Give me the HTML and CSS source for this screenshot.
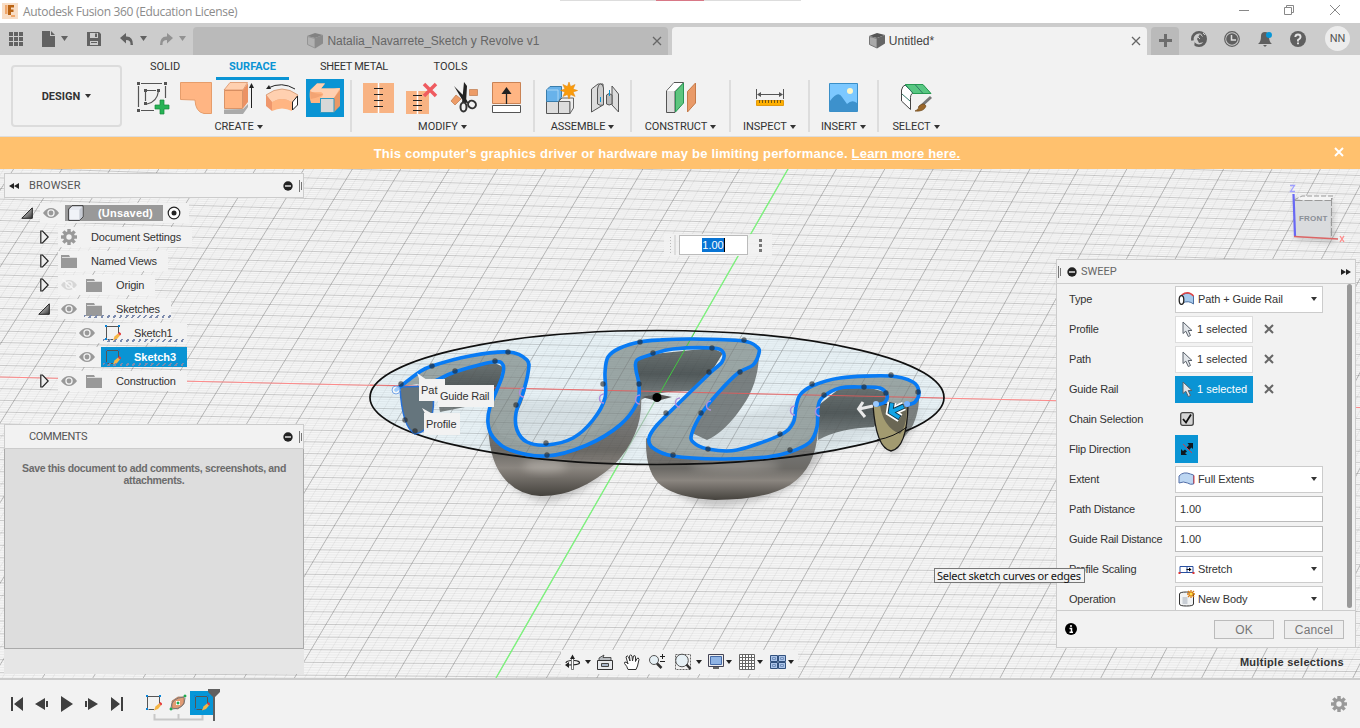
FILE: index.html
```html
<!DOCTYPE html>
<html lang="en">
<head>
<meta charset="utf-8">
<title>Autodesk Fusion 360 (Education License)</title>
<link rel="stylesheet" href="styles.css">
</head>
<body>
<svg width="0" height="0" class="defs">
  <defs>
    <linearGradient id="metal" x1="0" y1="0" x2="0" y2="1"><stop offset="0" stop-color="#7f8283"/><stop offset=".55" stop-color="#6c6a66"/><stop offset=".72" stop-color="#8b8680"/><stop offset="1" stop-color="#45423d"/></linearGradient>
    <linearGradient id="arm" x1="0" y1="0" x2="0" y2="1"><stop offset="0" stop-color="#6b7373"/><stop offset=".5" stop-color="#525a5b"/><stop offset="1" stop-color="#7d8586"/></linearGradient>
    <linearGradient id="tri" x1="0" y1="0" x2="1" y2="1"><stop offset="0" stop-color="#fff"/><stop offset="1" stop-color="#333"/></linearGradient>
    <symbol id="eye" viewBox="0 0 16 12"><path d="M0 6Q3.500 1 8 1T16 6Q12.500 11 8 11T0 6Z" fill="#999"/><circle cx="8" cy="6" r="3.700" fill="#f2f2f2"/><circle cx="8" cy="6" r="2.400" fill="#999"/></symbol>
    <symbol id="folder" viewBox="0 0 16 14"><path d="M0 1H8L9 3H16V14H0Z" fill="#999"/><path d="M1 3.500H16" stroke="#ddd"/></symbol>
    <symbol id="closed" viewBox="0 0 9 14"><path d="M.8 1H2.500L8.200 7 2.500 13H.8Z" fill="#eee" stroke="#222" stroke-width="1.200"/></symbol>
    <symbol id="open" viewBox="0 0 12 12"><path d="M11.300 .8V11.300H.8Z" fill="url(#tri)" stroke="#222"/></symbol>
    <symbol id="gear" viewBox="-8 -8 16 16"><g fill="#999"><g id="teeth"><rect x="-1.700" y="-8" width="3.400" height="16"/><rect x="-8" y="-1.700" width="16" height="3.400"/></g><use href="#teeth" transform="rotate(45)"/><circle r="5.800"/></g><circle r="2.700" fill="#f2f2f2"/></symbol>
    <symbol id="sketch" viewBox="0 0 16 16"><path d="M2 1.500H13M1.500 2V13M2.500 14.500H8M13.500 2V8" stroke="#555" fill="none"/><path d="M0 0H2V2H0ZM13 0H15V2H13ZM0 13H2V15H0Z" fill="#0a84d8"/><path d="M8 15.500L9.500 11.500 13 8.500 15 10.500 12 14Z" fill="#f6b545"/><path d="M13 8.500L14.500 7 16.500 9 15 10.500Z" fill="#e43a3a"/></symbol>
    <symbol id="minus" viewBox="0 0 10 10"><circle cx="5" cy="5" r="4.700" fill="#222"/><path d="M2 5H8" stroke="#fff" stroke-width="1.300"/></symbol>
    <symbol id="grip" viewBox="0 0 4 12"><path d="M.5 0V12M2.500 2V10" stroke="#777"/></symbol>
    <symbol id="cube" viewBox="0 0 16 16"><path d="M0 3L8 0 16 2 8 5Z" fill="#555"/><path d="M.5 3.500L8 5.500V15L.5 11.500Z" fill="#aaa" stroke="#777"/><path d="M8 5L16 2V10.500L8 15.500Z" fill="#666"/></symbol>
    <symbol id="x" viewBox="0 0 10 10"><path d="M1 1L9 9M9 1L1 9" stroke="currentColor" stroke-width="2"/></symbol>
    <symbol id="pointer" viewBox="0 0 12 17"><path d="M1 1V12.500L3.800 10.200 6.300 15.500 8.500 14.500 6.200 9.500H10Z" fill="#e2e6ea" stroke="#59616b"/></symbol>
    <symbol id="down" viewBox="0 0 6 4"><path d="M0 0H6L3 4Z" fill="currentColor"/></symbol>
  </defs>
</svg>

<header class="titlebar">
  <svg class="logo" viewBox="2 3 16 16"><rect x="2" y="3" width="16" height="16" fill="#f8ddc5"/><path d="M8 5H14V7.500H11V9.500H13.500V12H11V15H8Z" fill="#b96314"/><path d="M11 15H15V17H11ZM5 5H7.500V14H5Z" fill="#f0a76a"/></svg>
  <span class="app-name">Autodesk Fusion 360 (Education License)</span>
  <svg class="top-strip" viewBox="0 0 241 1"><path d="M0 0H241V1H0Z" fill="#ddd"/><path d="M96 0H144V1H96Z" fill="#d87886"/></svg>
  <svg class="window-buttons" viewBox="1232 0 120 23"><path d="M1239 10.500H1249M1284.500 7.500H1291.500V14.500H1284.500ZM1286.500 7V5.500H1293.500V12.500H1292M1330 5L1340 15M1340 5L1330 15" fill="none" stroke="#888"/></svg>
</header>

<nav class="tabbar">
  <svg class="quick" viewBox="0 23 193 32" fill="#626262">
    <path d="M9 32h4v4h-4zM14 32h4v4h-4zM19 32h4v4h-4zM9 37h4v4h-4zM14 37h4v4h-4zM19 37h4v4h-4zM9 42h4v4h-4zM14 42h4v4h-4zM19 42h4v4h-4z"/>
    <path d="M42 31H50V36H55V47H42ZM51 31L55 35H51ZM61 36H68L64.500 41Z"/>
    <path fill-rule="evenodd" d="M87 32H99L101 34V46H87ZM90 33V38H98V33ZM90 41V45H98V41ZM95 33.500H97V37H95ZM91 42H97V43H91Z"/>
    <path d="M120 38L126 33V36.500Q133 36 133 45H130.500Q131 40 126 40V43.500ZM140 36H147L143.500 41Z"/>
    <path fill="#929292" d="M173 38L167 33V36.500Q160 36 160 45H162.500Q162 40 167 40V43.500ZM179 36H186L182.500 41Z"/>
  </svg>
  <div class="doc-tab"><span class="doc-name"><svg class="faded" width="16" height="16"><use href="#cube"/></svg>Natalia_Navarrete_Sketch y Revolve v1</span><svg class="tab-close" viewBox="0 0 10 10"><path d="M1 1L9 9M9 1L1 9" stroke="#666" stroke-width="1.300"/></svg></div>
  <div class="doc-tab active"><span class="doc-name"><svg width="16" height="16"><use href="#cube"/></svg>Untitled*</span><svg class="tab-close" viewBox="0 0 10 10"><path d="M1 1L9 9M9 1L1 9" stroke="#666" stroke-width="1.300"/></svg></div>
  <div class="add-tab"><svg viewBox="0 0 13 13" width="13" height="13"><path d="M6.500 0V13M0 6.500H13" stroke="#6d6d6d" stroke-width="3"/></svg></div>
  <svg class="status" viewBox="1180 23 144 32">
    <circle cx="1199" cy="39" r="6.700" fill="none" stroke="#5f5f5f" stroke-width="2.600"/><path d="M1197 39L1200 34 1206 36 1205 42 1199 43Z" fill="#5f5f5f"/><path d="M1190.500 41L1195 40 1194 47Z" fill="#ccc"/><path d="M1197 36l3 3M1200 33.500l2.500 3M1203 33l2 2" stroke="#ccc"/>
    <circle cx="1232" cy="39" r="7.300" fill="none" stroke="#5f5f5f" stroke-width="1.200"/><circle cx="1232" cy="39" r="5.800" fill="#5f5f5f"/><path d="M1231.500 35V40H1236" fill="none" stroke="#ddd" stroke-width="1.500"/>
    <path d="M1258 44Q1261 42 1261 36Q1261 32 1265 32T1269 36Q1269 42 1272 44ZM1263 45H1267L1265 47Z" fill="#5f5f5f"/><circle cx="1269" cy="35" r="3" fill="#0696d7"/>
    <circle cx="1298" cy="39" r="8" fill="#5f5f5f"/><path d="M1295.300 37Q1295.500 34.500 1298 34.500T1300.600 37Q1300.500 38.500 1298 40V41.500M1298 42.500V44.300" fill="none" stroke="#e5e5e5" stroke-width="1.900"/>
  </svg>
  <div class="avatar">NN</div>
</nav>

<section class="ribbon">
  <div class="workspace">DESIGN<svg class="caret" width="6" height="4"><use href="#down"/></svg></div>
  <div class="ribbon-main">
    <div class="ribbon-tabs"><span class="solid">SOLID</span><span class="selected">SURFACE</span><span class="sheet">SHEET METAL</span><span class="tools">TOOLS</span></div>
    <div class="groups">
      <div class="group create"><div class="icons">
        <svg viewBox="134 79 38 38"><path d="M141 83.500H162M138.500 86V107M141 110.500H154M165.500 86V98M147 90.500H156M145.500 92V101M158.500 91Q157 102 147 104" fill="none" stroke="#555" stroke-width="1.200"/><path d="M137 82h3v3h-3zM164 82h3v3h-3zM137 109h3v3h-3zM144 89h3v3h-3zM157 89h3v3h-3zM144 102h3v3h-3z" fill="#555"/><path d="M160 100H164V105H169V109H164V114H160V109H155V105H160Z" fill="#27b355" stroke="#148a3a" stroke-width=".7"/></svg>
        <svg viewBox="177 79 38 38"><path d="M180.500 82.500H211.500V113.500H204Q195.500 112 195 100L180.500 99.500Z" fill="#ffb583" stroke="#e69d6b"/></svg>
        <svg viewBox="220 79 38 38"><path d="M224 109.500L243 109 248 104V107L243 114H224Z" fill="#aaa"/><path d="M224 90L230 82.500H247.500L243 90Z" fill="#ffd0b0" stroke="#d78859" stroke-width=".7"/><path d="M224.500 90.500H242.500V108.500H224.500Z" fill="#ffb583" stroke="#cc7946" stroke-width=".7"/><path d="M243 90L248 83V102L243 108.500Z" fill="#eb9264"/><path d="M251.500 108V87" stroke="#222"/><path d="M249 88L251.500 83 254 88Z" fill="#222"/></svg>
        <svg viewBox="263 79 38 38"><path d="M266 95Q282 83 298 95L292 103Q282 96 272 103Z" fill="#ffd0b0" stroke="#c98961" stroke-width=".7"/><path d="M266 95L272 102V111L266 106Z" fill="#ef976c"/><path d="M272 102Q282 96 292 102V111Q282 106 272 111Z" fill="#ffb583"/><path d="M292.500 102L297.500 96V105L292.500 110Z" fill="#fff" stroke="#222"/><path d="M268 88Q282 81 295 89" fill="none" stroke="#222"/><path d="M266 89L269 85 271 89Z" fill="#222"/></svg>
        <svg class="on" viewBox="306 79 38 38"><path d="M310 90L317 83.500H325L321 88.500H333L340 88V104L334 112V98H320V103H311Q309 98 310 90Z" fill="#ffb583"/><path d="M311 90L317 83.500H325L321 88.500H335L340 88 334 98H320Q326 94 321 92H310Z" fill="#ffd0b0"/><path d="M310 91Q315 94 323 94Q321 97 310.500 99Z" fill="#f3a473"/><path d="M334 98L340 90V106L334 112Z" fill="#e99866"/><path d="M320.500 98.500H334V112.500H320.500Z" fill="#d8d8d8" stroke="#319ac0"/></svg>
      </div><label>CREATE<svg class="caret" width="6" height="4"><use href="#down"/></svg></label></div>
      <div class="group modify"><div class="icons">
        <svg viewBox="359 79 38 38"><path d="M363 83H394V113H363Z" fill="#f8b383"/><path d="M378.500 83V113" stroke="#fff" stroke-width="1.500"/><path d="M374 88.500H383M374 94.500H383M374 100.500H383M374 106.500H383" stroke="#222"/></svg>
        <svg viewBox="402 79 38 38"><path d="M406 91H429V114H406Z" fill="#f8b383"/><path d="M417.500 91V114" stroke="#fff" stroke-width="1.500"/><path d="M413 95.500H422M413 100.500H422M413 105.500H422M413 110.500H422" stroke="#222"/><path d="M424 84L436 96M436 84L424 96" stroke="#ef5b60" stroke-width="3.500"/></svg>
        <svg viewBox="445 79 38 38"><path d="M469.500 89.500H477.500V95.500H469.500ZM451 101L456 95 461 99 455 105Z" fill="#ed9c67" stroke="#b66e3f" stroke-width=".6"/><path d="M454 86L465 97 469 104 463 101ZM464 82L467 86 466 103 462 103Z" fill="#222"/><ellipse cx="463.500" cy="107" rx="3" ry="4.500" fill="none" stroke="#333" stroke-width="2"/><ellipse cx="472" cy="104.500" rx="4" ry="3.700" transform="rotate(35 472 104.500)" fill="none" stroke="#333" stroke-width="2"/></svg>
        <svg viewBox="488 79 38 38"><path d="M492.500 82.500H520.500V103.500H492.500Z" fill="#ffb583" stroke="#ca8355"/><path d="M492.500 105.500H520.500V112.500H492.500Z" fill="#fff" stroke="#555"/><path d="M506.500 104V92" stroke="#222" stroke-width="1.300"/><path d="M501.500 94L506.500 87 511.500 94Z" fill="#222"/></svg>
      </div><label>MODIFY<svg class="caret" width="6" height="4"><use href="#down"/></svg></label></div>
      <div class="group assemble"><div class="icons">
        <svg viewBox="542 79 38 38"><path d="M546.500 101.500H558.500V113.500H546.500ZM558.500 101.500H570V113.500H558.500Z" fill="#ddd" stroke="#555"/><path d="M558.500 101.500L562 98H573.500V108L570 113.500V101.500Z" fill="#eee" stroke="#666"/><path d="M546.500 90L550 86.500H561.500V97L558 101.500H546.500Z" fill="#68b2ea" stroke="#397dac"/><path d="M547 90H558V101" fill="none" stroke="#a9d5f3"/><path d="M569 82l1.600 4.500 4.500-2-2 4.500 4.500 1.500-4.500 1.500 2 4.500-4.500-2-1.600 4.500-1.600-4.500-4.500 2 2-4.500-4.500-1.500 4.500-1.500-2-4.500 4.500 2z" fill="#f99b0c" stroke="#e38405" stroke-width=".5"/></svg>
        <svg viewBox="586 79 38 38"><path d="M591.500 89L598 84H603V105L591.500 112Z" fill="#ddd" stroke="#555"/><path d="M597.500 89Q598 84 600.500 84T603.500 88V105Q600 106 597.500 104Z" fill="#ccc" stroke="#555"/><path d="M612 92V86L618.500 94V112L612 105Z" fill="#ddd" stroke="#555"/><path d="M606.500 95Q609 92 612 95V104Q609 106 606.500 104Z" fill="#bbb" stroke="#555"/><path d="M600.500 97V102M609.500 90V96" stroke="#0696d7"/></svg>
      </div><label>ASSEMBLE<svg class="caret" width="6" height="4"><use href="#down"/></svg></label></div>
      <div class="group construct"><div class="icons"><svg viewBox="662 79 38 38"><path d="M666.500 91L674 82.500H683.500L675 91V112.500H666.500Z" fill="#ddd" stroke="#555"/><path d="M667 91L674 83H683L675 91Z" fill="#fff"/><path d="M675.500 91.500L683.500 83V103L675.500 112Z" fill="#5ec57e" stroke="#289653"/><path d="M687.500 91.500L695.500 83V103L687.500 112Z" fill="#e99a68" stroke="#c57a49"/></svg></div><label>CONSTRUCT<svg class="caret" width="6" height="4"><use href="#down"/></svg></label></div>
      <div class="group inspect"><div class="icons"><svg viewBox="751 79 38 38"><path d="M756.500 89V99M783.500 89V99M758 94.500H782" stroke="#555"/><path d="M757 94.500L761 92V97ZM783 94.500L779 92V97Z" fill="#555"/><path d="M756.500 100.500H783.500V105.500H756.500Z" fill="#ffb000" stroke="#e29a10"/><path d="M759.500 100V103M762.500 100V103M765.500 100V103M768.500 100V103M771.500 100V103M774.500 100V103M777.500 100V103M780.500 100V103" stroke="#765710"/></svg></div><label>INSPECT<svg class="caret" width="6" height="4"><use href="#down"/></svg></label></div>
      <div class="group insert"><div class="icons"><svg viewBox="825 79 38 38"><path d="M829.500 83.500H857.500V111.500H829.500Z" fill="#7cc8ff" stroke="#3a8fc8"/><path d="M830 101Q838 90 842 97L847 104Q852 99 857 103V111H830Z" fill="#3d91cc"/><circle cx="850" cy="91" r="3" fill="#fff7c8"/></svg></div><label>INSERT<svg class="caret" width="6" height="4"><use href="#down"/></svg></label></div>
      <div class="group select"><div class="icons"><svg viewBox="896 79 38 38"><path d="M900.500 90Q901 86 905 84.500L922 85 929 93H912Q909 94 909.500 100V109.500L900.500 101Z" fill="#fff" stroke="#444"/><path d="M904.500 84.500H922L930 93.500H912Z" fill="#58c782" stroke="#269b52"/><path d="M914 84.500L922 93.500M901 94L909 101M904 85L912 93" fill="none" stroke="#376"/><path d="M918 108L930 97" stroke="#777" stroke-width="3"/><path d="M914 111Q918 110 918 106Q923 102 925 106Q923 112 914 111Z" fill="#9b682b" stroke="#70491a" stroke-width=".7"/></svg></div><label>SELECT<svg class="caret" width="6" height="4"><use href="#down"/></svg></label></div>
    </div>
  </div>
</section>

<div class="banner"><span>This computer's graphics driver or hardware may be limiting performance. <u>Learn more here.</u></span><svg class="banner-close" width="10" height="10"><use href="#x"/></svg></div>

<main class="viewport">
  <svg class="scene" viewBox="0 169 1360 509">
    <clipPath id="disc"><ellipse cx="657" cy="397.500" rx="287" ry="67"/></clipPath>
    <filter id="soft" x="-10%" y="-10%" width="120%" height="130%"><feGaussianBlur stdDeviation="3"/></filter>
    <filter id="gloss" x="-20%" y="-50%" width="140%" height="200%"><feGaussianBlur stdDeviation="4"/></filter>
    <g id="grid"></g>
    <path d="M0 377L1360 407.500" stroke="#ff8a8a" stroke-width="1"/>
    <path d="M788 169L496 678" stroke="#7cf57c" stroke-width="1.300"/>
    <g class="shadow" filter="url(#soft)">
      <path d="M485 435Q505 500 548 502Q600 495 648 425L640 400L490 400ZM645 440Q655 500 715 507Q800 502 825 450L870 435 895 455 925 410 800 400Z"/>
    </g>
    <ellipse cx="657" cy="397.500" rx="287" ry="67" fill="#e1f0f6" fill-opacity=".65"/>
    <path d="M435 383L456 372 493 362 503 367 500 380 490 402 440 412Z" fill="url(#arm)"/>
    <path d="M636 372L637 360 653 354 712 348 723 353 710 374 689 391Q655 391 641 400Z" fill="url(#arm)"/>
    <path d="M818 440L819 405 840 388 863 386 885 392 887 405 874 427Q840 428 818 440Z" fill="url(#arm)"/>
    <path d="M759 355Q758 385 742 407Q725 432 707 440L692 433 705 405 740 372Z" fill="#7a8182"/>
    <path d="M528 370Q528 393 517 413L518 390Z" fill="#777f7f"/>
    <path d="M488 405Q486 457 503 477Q517 495 540 496Q578 497 615 464Q644 433 641 395L620 420 547 450 500 435Z" fill="url(#metal)"/>
    <path d="M646 438Q645 474 662 486Q678 498 715 500Q765 500 790 485Q816 468 818 430L790 447 720 454 670 450Z" fill="url(#metal)"/>
    <path d="M906 405L919 392Q920 410 913 425Q908 434 900 441Z" fill="#7c8180"/>
    <g class="highlight" filter="url(#gloss)"><ellipse cx="545" cy="466" rx="22" ry="6"/><ellipse cx="735" cy="466" rx="45" ry="4"/></g>
    <path class="smooth band" data-points="396,390 418,373 432,366 470,356 508,352 527,360 528,373 523,393 516,413 517,430 527,442 547,445 573,438 593,420 605,398 605,373 608,357 620,348 640,342 660,340 693,339 743,341 757,347 759,353 753,365 738,373 718,393 702,413 692,433 693,442 708,449 737,450 780,435 793,423 796,407 800,395 812,386 840,378 890,376 913,382 919,392 915,402 907,405 877,405 885,402 887,395 880,388 863,387 840,388 823,397 818,407 817,427 810,442 790,452 767,457 720,459 673,456 653,448 649,438 657,425 677,405 710,373 722,362 723,352 712,348 673,349 653,354 637,360 636,370 639,385 637,403 620,425 587,445 547,456 510,450 493,437 488,423 490,407 502,377 503,365 493,362 455,372 437,380 400,387"/>
    <g clip-path="url(#disc)"><use href="#grid" opacity=".65"/></g>
    <path d="M370 385L944 398" stroke="#ee5a5a" stroke-width=".8"/>
    <path d="M696 330L657 398" stroke="#40d440" stroke-width=".9"/>
    <ellipse cx="657" cy="397.500" rx="287" ry="67" fill="none" stroke="#101010" stroke-width="1.700"/>
    <path d="M400 387L433 386Q437 431 415 434Q402 427 400 387Z" fill="#65757d" stroke="#2871d6" stroke-width="1.500"/>
    <path d="M873 405H908Q907 448 891 451Q876 448 873 405Z" fill="#a29a70" stroke="#171717" stroke-width="1.300"/>
    <path d="M880 405L907 405Q907 426 900 434Q883 427 880 405Z" fill="#6a6755"/>
    <path d="M877 440Q894 437 907 427" fill="none" stroke="#111"/>
    <g class="rail">
      <path class="smooth" data-points="396,390 418,373 432,366 470,356 508,352 527,360 528,373 523,393 516,413 517,430 527,442 547,445 573,438 593,420 605,398 605,373 608,357 620,348 640,342 660,340 693,339 743,341 757,347 759,353 753,365 738,373 718,393 702,413 692,433 693,442 708,449 737,450 780,435 793,423 796,407 800,395 812,386 840,378 890,376 913,382 919,392 915,402 907,405"/>
      <path class="smooth" data-points="437,380 455,372 493,362 503,365 502,377 490,407 488,423 493,437 510,450 547,456 587,445 620,425 637,403 639,385 636,370 637,360 653,354 673,349 712,348 723,352 722,362 710,373 677,405 657,425 649,438 653,448 673,456 720,459 767,457 790,452 810,442 817,427 818,407 823,397 840,388 863,387 880,388 887,395 885,402 877,405"/>
    </g>
    <g class="knots"><circle cx="432" cy="366" r="2.700"/><circle cx="455" cy="371" r="2.700"/><circle cx="508" cy="352" r="2.700"/><circle cx="495" cy="361" r="2.700"/><circle cx="516" cy="405" r="2.700"/><circle cx="546" cy="443" r="2.700"/><circle cx="547" cy="455" r="2.700"/><circle cx="603" cy="384" r="2.700"/><circle cx="639" cy="384" r="2.700"/><circle cx="640" cy="342" r="2.700"/><circle cx="653" cy="353" r="2.700"/><circle cx="744" cy="340" r="2.700"/><circle cx="712" cy="348" r="2.700"/><circle cx="709" cy="372" r="2.700"/><circle cx="740" cy="372" r="2.700"/><circle cx="666" cy="413" r="2.700"/><circle cx="701" cy="413" r="2.700"/><circle cx="708" cy="449" r="2.700"/><circle cx="673" cy="455" r="2.700"/><circle cx="780" cy="434" r="2.700"/><circle cx="790" cy="450" r="2.700"/><circle cx="812" cy="384" r="2.700"/><circle cx="824" cy="395" r="2.700"/><circle cx="864" cy="387" r="2.700"/><circle cx="891" cy="375" r="2.700"/><circle cx="918" cy="392" r="2.700"/><circle cx="886" cy="393" r="2.700"/><circle cx="401" cy="384" r="2.700"/><circle cx="405" cy="420" r="2.700"/><circle cx="415" cy="431" r="2.700"/></g>
    <path d="M642 397L657 394 672 397 657 401Z" fill="#555"/><circle cx="657" cy="397.500" r="4.500"/>
    <g fill="none" stroke="#ad8fdb" stroke-width="1.500"><path d="M604 394a4 4 0 1 0 0 9M640 395a4 4 0 1 0 0 9M680 398a4 4 0 1 0 0 9M711 401a4 4 0 1 0 0 9M795 406a4 4 0 1 0 0 9M820 407a4 4 0 1 0 0 9M524 388a4 4 0 1 0 0 9"/></g>
    <circle cx="396" cy="390" r="4" fill="#fff" fill-opacity=".6" stroke="#75a4e6"/>
    <circle cx="876" cy="404" r="3" fill="#9ac8fb"/><circle cx="907" cy="404" r="3" fill="#77b3ff"/>
    <path d="M873 406L859 409M863 402L858.500 409 865 417" fill="none" stroke="#e9e9e9" stroke-width="3"/>
    <path id="arrow-line" d="M904 406L892 411.500M892 402.500L890.500 412 900 418" fill="none" stroke="#fff" stroke-width="9"/>
    <path d="M904 406L892 411.500M892 402.500L890.500 412 900 418" fill="none" stroke="#14303f" stroke-width="5.500"/>
    <path d="M903.500 406.300L892 411.500M892 403.200L890.500 412 899.300 417.500" fill="none" stroke="#12a4e6" stroke-width="3.600"/>
    <path d="M417 373L427 380 421 384ZM422 408L431 413 427 417Z" fill="#f2f2f2"/>
  </svg>

  <div class="viewcube"><svg viewBox="1280 178 70 70"><path d="M1294 200L1333 203 1334 243 1296 239Z" fill="#777" opacity=".35" filter="url(#soft)"/><path d="M1294 200L1302 196H1333L1331 202Z" fill="#f5f5f5" stroke="#999" stroke-dasharray="5 2"/><path d="M1294 200L1331 200 1330 238 1295 237Z" fill="#d9dbdd"/><path d="M1294.500 200.500H1331M1331.500 198V237" stroke="#999" stroke-dasharray="8 2"/><path d="M1293.500 194L1295 236" stroke="#6868f5" stroke-width="2.200"/><path d="M1294 236.500L1338 239" stroke="#dc6565" stroke-width="1.500"/><path d="M1290 185.500H1294.500L1290.500 191.500H1295" fill="none" stroke-width="1.300" stroke="#a0a0ff"/><path d="M1340 236L1344 242M1344 236L1340 242" stroke="#ff8a8a" stroke-width="1.300"/></svg><span>FRONT</span></div>

  <div class="float-input"><i class="dots"></i><i class="bar"></i><div class="value"><mark>1.00</mark></div><i class="more"></i></div>
  <span class="tag path">Path</span><span class="tag guide">Guide Rail</span><span class="tag profile">Profile</span>

  <aside class="browser">
    <div class="panel-head"><svg class="collapse" viewBox="0 0 10 6"><path d="M5 0V6L0 3ZM10 0V6L5 3Z" fill="#222"/></svg><span>BROWSER</span><svg class="hide" width="10" height="10"><use href="#minus"/></svg><svg width="4" height="12"><use href="#grip"/></svg></div>
    <ul class="tree">
      <li class="root"><svg class="arrow" width="12" height="12"><use href="#open"/></svg><div class="chip"><svg width="16" height="12"><use href="#eye"/></svg><b class="unsaved"><svg width="16" height="16" viewBox="0 0 16 16"><path d="M.7 4L4 .7H15V12L11.500 15.300H.7Z" fill="#e5e8ef" stroke="#333"/><path d="M1.500 4.500H11.500V15L14.500 12V1.500L11.500 4.500" fill="#c7cbd3"/><path d="M1.500 5H11V14.500H1.500Z" fill="#f0f3f8"/></svg><span>(Unsaved)</span></b><svg class="radio" viewBox="0 0 14 14"><circle cx="7" cy="7" r="5.800" fill="#fff" stroke="#222" stroke-width="1.200"/><circle cx="7" cy="7" r="2.500" fill="#222"/></svg></div></li>
      <li class="lv1"><svg class="arrow" width="9" height="14"><use href="#closed"/></svg><div class="chip"><svg width="16" height="16"><use href="#gear"/></svg><span>Document Settings</span></div></li>
      <li class="lv1"><svg class="arrow" width="9" height="14"><use href="#closed"/></svg><div class="chip"><svg width="16" height="14"><use href="#folder"/></svg><span>Named Views</span></div></li>
      <li class="lv1 two"><svg class="arrow" width="9" height="14"><use href="#closed"/></svg><div class="chip"><svg class="off" width="16" height="12" viewBox="0 0 16 12"><use href="#eye"/><path d="M1 0L15 12" stroke="#fff" stroke-width="1.500"/></svg><svg width="16" height="14"><use href="#folder"/></svg><span>Origin</span></div></li>
      <li class="lv1 two"><svg class="arrow" width="12" height="12"><use href="#open"/></svg><div class="chip"><svg width="16" height="12"><use href="#eye"/></svg><svg width="16" height="14"><use href="#folder"/></svg><span>Sketches</span><i class="hatch"></i></div></li>
      <li class="leaf"><div class="chip"><svg width="16" height="12"><use href="#eye"/></svg><b class="item"><svg width="16" height="16"><use href="#sketch"/></svg><span>Sketch1</span><i class="hatch"></i></b></div></li>
      <li class="leaf chosen"><div class="chip"><svg width="16" height="12"><use href="#eye"/></svg><b class="item"><svg width="16" height="16"><use href="#sketch"/></svg><span>Sketch3</span><i class="hatch"></i></b></div></li>
      <li class="lv1 two"><svg class="arrow" width="9" height="14"><use href="#closed"/></svg><div class="chip"><svg width="16" height="12"><use href="#eye"/></svg><svg width="16" height="14"><use href="#folder"/></svg><span>Construction</span></div></li>
    </ul>
  </aside>

  <aside class="comments">
    <div class="panel-head"><span class="inset">COMMENTS</span><svg class="hide" width="10" height="10"><use href="#minus"/></svg><svg width="4" height="12"><use href="#grip"/></svg></div>
    <p>Save this document to add comments, screenshots, and attachments.</p>
    <div class="comment-foot"></div>
  </aside>

  <section class="sweep">
    <div class="sweep-head"><svg width="4" height="12"><use href="#grip"/></svg><svg class="hide" width="10" height="10"><use href="#minus"/></svg><span>SWEEP</span><svg class="expand" viewBox="0 0 10 6"><path d="M0 0V6L5 3ZM5 0V6L10 3Z" fill="#222"/></svg></div>
    <div class="sweep-body">
      <div class="field"><label>Type</label><div class="drop"><svg viewBox="1179 291 16 16"><path d="M1183 295Q1189 291 1194 296V304Q1189 300 1183 303Z" fill="#a6c9ec" stroke="#4d70a0"/><path d="M1182 295Q1189 290 1194 296" fill="none" stroke="#e34444" stroke-width="1.500"/><ellipse cx="1182" cy="300" rx="2.300" ry="4.300" fill="#fff" stroke="#222" stroke-width="1.300"/></svg><span>Path + Guide Rail</span><svg class="arrow" width="6" height="4"><use href="#down"/></svg></div></div>
      <div class="field"><label>Profile</label><div class="pick"><svg width="12" height="17"><use href="#pointer"/></svg>1 selected</div><svg class="clear" width="10" height="10"><use href="#x"/></svg></div>
      <div class="field"><label>Path</label><div class="pick"><svg width="12" height="17"><use href="#pointer"/></svg>1 selected</div><svg class="clear" width="10" height="10"><use href="#x"/></svg></div>
      <div class="field"><label>Guide Rail</label><div class="pick active"><svg width="12" height="17"><use href="#pointer"/></svg>1 selected</div><svg class="clear" width="10" height="10"><use href="#x"/></svg></div>
      <div class="field"><label>Chain Selection</label><svg class="check" viewBox="0 0 14 14"><rect x=".7" y=".7" width="12.600" height="12.600" rx="2" fill="#d4d4d4" stroke="#444" stroke-width="1.300"/><path d="M3 7L6 10.500 11 2.500" fill="none" stroke="#111" stroke-width="1.800"/></svg></div>
      <div class="field"><label>Flip Direction</label><div class="flip"><svg viewBox="0 0 14 14"><path d="M1 13V7L3 9 5 7.500 7 9.500 5 11 7 13ZM13 1V7L11.500 5.500 9 8 6.500 5.500 9 3 7.500 1Z" fill="#101820"/><path d="M3 2L12 11" stroke="#d43b4a"/></svg></div></div>
      <div class="field"><label>Extent</label><div class="drop"><svg viewBox="0 0 16 16"><path d="M.5 5Q5 0 12 3L15 4V13Q12 14 9 12Q5 10 .5 12Z" fill="#bcd6f2" stroke="#526ea8"/><path d="M15.500 4.500V12.500" stroke="#e34444"/></svg><span>Full Extents</span><svg class="arrow" width="6" height="4"><use href="#down"/></svg></div></div>
      <div class="field"><label>Path Distance</label><div class="input">1.00</div></div>
      <div class="field"><label>Guide Rail Distance</label><div class="input">1.00</div></div>
      <div class="field"><label>Profile Scaling</label><div class="drop"><svg viewBox="0 0 16 16"><path d="M1.500 12V5.500H14.500V12M1 11.500H15M8.500 6V11" fill="none" stroke="#284fa0"/><path d="M8 8.500H12" stroke="#111"/><path d="M10.500 6.500L13 8.500 10.500 10.500Z"/><path d="M0 11H2V13H0ZM14 11H16V13H14Z" fill="#d33"/></svg><span>Stretch</span><svg class="arrow" width="6" height="4"><use href="#down"/></svg></div></div>
      <div class="field"><label>Operation</label><div class="drop"><svg viewBox="0 0 16 16"><path d="M1 3Q1 1 8 1T15 3V13Q15 15 8 15T1 13Z" fill="#f2f3f4" stroke="#333"/><path d="M4 6H9V13H4Z" fill="#c9ced5"/><path d="M12.500-1V7M8.500 3H16.500M9.500 0L15.500 6M15.500 0L9.500 6" stroke="#d97b11" stroke-width="1.300"/><circle cx="12.500" cy="3" r="1.500" fill="#ffe24a"/></svg><span>New Body</span><svg class="arrow" width="6" height="4"><use href="#down"/></svg></div></div>
    </div>
    <div class="scroll"></div>
    <div class="sweep-foot"><svg viewBox="0 0 12 12"><circle cx="6" cy="6" r="6"/><path d="M5 3H7M4.500 5.500H6.500V9M4.500 9.300H8" stroke="#fff" stroke-width="1.500"/></svg><div class="btn">OK</div><div class="btn">Cancel</div></div>
  </section>
  <span class="tooltip">Select sketch curves or edges</span>
  <strong class="multi">Multiple selections</strong>

  <div class="navtools">
    <svg width="32" viewBox="561 650 32 24"><path d="M571 660.500Q566 661 566 663M574 660.500Q580 661 579.500 663T568 665" fill="none" stroke="#222" stroke-width="1.200"/><path d="M571.500 658H573.500V669.500H571.500Z" fill="#fff" stroke="#444" stroke-width=".7"/><path d="M570 659L572.500 654.500 575 659ZM565 665L569 662V668Z" fill="#222"/><path d="M585 660H591L588 664Z" fill="#222"/></svg>
    <svg width="25" viewBox="593 650 25 24"><path d="M597.500 660.500H612.500V669.500H597.500Z" fill="#e8eaed" stroke="#333"/><path d="M601.500 663.500H608.500V666.500H601.500Z" fill="#aab7c8" stroke="#444"/><path d="M599 660V658L604 655 603 657.500H611V660" fill="#b8bcc0" stroke="#333" stroke-width=".8"/></svg>
    <svg width="26" viewBox="618 650 26 24"><path d="M628 669.500Q627 666 624.500 663.500 624 661 627 662.500L628 664 626 657Q627 654.500 628.500 657L630 661 629.500 656Q630.500 653.500 632 656L632.500 661 633.500 656Q635 654.500 635.500 657L635.500 661.500 637 658.500Q638.500 657 639 659.500L637.500 666 636 669.500Z" fill="#fff" stroke="#333"/></svg>
    <svg width="25" viewBox="644 650 25 24"><circle cx="654" cy="660" r="4.500" fill="#e6f0f5" stroke="#555"/><path d="M657 663.500L661.500 668" stroke="#333" stroke-width="2.500"/><path d="M662.500 654V659M660 656.500H665M660 661.500H665" stroke="#222"/></svg>
    <svg width="34" viewBox="669 650 34 24"><path d="M675.500 654.500H690.500V669.500H675.500Z" fill="none" stroke="#666" stroke-dasharray="2 1"/><circle cx="682" cy="660.500" r="6.300" fill="#e6f0f5" stroke="#555"/><path d="M686.500 664.500L690.500 669" stroke="#333" stroke-width="2.500"/><path d="M696 660H702L699 664Z" fill="#222"/></svg>
    <svg width="31" viewBox="703 650 31 24"><path d="M708.500 654.500H723.500V666.500H708.500Z" fill="#eee" stroke="#445"/><path d="M710.500 656.500H721.500V664.500H710.500Z" fill="#8fb4e5" stroke="#456aa8"/><path d="M713 669H719V667H713Z" fill="#666"/><path d="M726 660H732L729 664Z" fill="#222"/></svg>
    <svg width="31" viewBox="734 650 31 24"><path d="M739.500 654.500H754.500V669.500H739.500ZM742.500 655V669M745.500 655V669M748.500 655V669M751.500 655V669M740 657.500H754M740 660.500H754M740 663.500H754M740 666.500H754" fill="#fff" stroke="#666"/><path d="M757 660H763L760 664Z" fill="#222"/></svg>
    <svg width="33" viewBox="765 650 33 24"><path d="M770.500 655.500H777.500V661.500H770.500ZM778.500 655.500H785.500V661.500H778.500ZM770.500 662.500H777.500V668.500H770.500ZM778.500 662.500H785.500V668.500H778.500Z" fill="#adc5e9" stroke="#31517e"/><path d="M772.500 657.500H775.500V659.500H772.500ZM780.500 657.500H783.500V659.500H780.500ZM772.500 664.500H775.500V666.500H772.500ZM780.500 664.500H783.500V666.500H780.500Z" fill="none" stroke="#7290bd"/><path d="M788 660H794L791 664Z" fill="#222"/></svg>
  </div>
</main>

<footer class="timeline">
  <svg class="playback" viewBox="0 680 135 48" fill="#3f3f3f"><path d="M11 697H13V711H11ZM23 697V711L14 704ZM35 704L45 698V710ZM46 701H48V707H46ZM61 696L73 704 61 712ZM85 701H87V707H85ZM88 698L98 704 88 710ZM111 697L120 704 111 711ZM121 697H123V711H121Z"/></svg>
  <svg class="features" viewBox="135 680 100 48"><path d="M154.500 714V719.500H202.500V714M178.500 714V720" fill="none" stroke="#c8c8c8" stroke-width="2"/><use href="#sketch" x="146" y="695" width="16" height="16"/><path d="M172 708V701L178 697H184V704L178 709Z" fill="#e19b74" stroke="#a06a4c" stroke-width=".7"/><path d="M171 708Q171 698 184 697M172 709Q185 709 185 698" fill="none" stroke="#777"/><path d="M176 701H180V705H176Z" fill="#fff"/><path d="M170 708h2v2h-2zM184 695h2v2h-2zM177 702h2v2h-2z" fill="#20ad50" stroke="#20ad50" stroke-width=".6"/><path d="M190 691H213V715H190Z" fill="#0696d7"/><use href="#sketch" x="194" y="695" width="16" height="16"/><path d="M208 689H220V692L215 697V721H213V697L208 692Z" fill="#606060"/></svg>
  <svg class="settings" width="16" height="16"><use href="#gear"/></svg>
</footer>
<script src="scene.js"></script>
</body>
</html>
```
FILE: scene.js
```js
const NS = "http://www.w3.org/2000/svg";
const grid = document.getElementById("grid");

function addPath(d, className) {
  const path = document.createElementNS(NS, "path");
  path.setAttribute("d", d);
  path.setAttribute("class", className);
  grid.appendChild(path);
}

// Ground plane: every fifth line is a major one.
let minor = "";
let major = "";
for (let i = -130; i <= 150; i++) {
  const k = i / 5;
  const y = 377 + 11.6 * k + 0.03 * k * k;
  const slope = 0.0226 - 0.0006 * k;
  const d = `M0 ${y.toFixed(2)}L1360 ${(y + 1360 * slope).toFixed(2)}`;
  if (i % 5 === 0) major += d; else minor += d;
}
addPath(minor, "minor flat");
addPath(major, "major flat");
minor = "";
major = "";
for (let i = -85; i <= 120; i++) {
  const k = i / 5;
  const d = `M${(788 + 48.4 * k).toFixed(2)} 169L${(496 + 50.4 * k).toFixed(2)} 678`;
  if (i % 5 === 0) major += d; else minor += d;
}
addPath(minor, "minor");
addPath(major, "major");

// Catmull-Rom curves through the sketch fit points.
document.querySelectorAll(".smooth").forEach((el) => {
  const p = el.dataset.points.split(" ").map((s) => s.split(",").map(Number));
  let d = `M${p[0]}`;
  for (let i = 0; i < p.length - 1; i++) {
    const a = p[i - 1] || p[i], b = p[i], c = p[i + 1], e = p[i + 2] || c;
    d += `C${b[0] + (c[0] - a[0]) / 6} ${b[1] + (c[1] - a[1]) / 6} ${c[0] - (e[0] - b[0]) / 6} ${c[1] - (e[1] - b[1]) / 6} ${c[0]} ${c[1]}`;
  }
  el.setAttribute("d", d);
});
```
FILE: styles.css
```css
* { box-sizing: border-box; }
body { margin: 0; width: 1360px; height: 728px; overflow: hidden; display: flex; flex-direction: column; background: #f2f2f2; color: #333; font: 11px "Liberation Sans", Arial, sans-serif; }
svg { display: block; flex: none; }
.defs { position: absolute; }

.titlebar { height: 23px; flex: none; background: #fff; display: flex; align-items: flex-start; }
.logo { width: 16px; height: 16px; margin: 3px 5px 0 2px; }
.app-name { width: 537px; padding-top: 3px; font: 12px/17px "Open Sans", sans-serif; letter-spacing: -.32px; color: #8b8b8b; white-space: nowrap; }
.top-strip { width: 241px; height: 1px; }
.window-buttons { width: 120px; height: 23px; margin-left: auto; margin-right: 8px; }

.tabbar { height: 32px; flex: none; display: flex; align-items: flex-end; background: #ccc; }
.quick { width: 193px; height: 32px; }
.doc-tab { width: 475px; height: 28px; margin-right: 4px; padding-right: 6px; display: flex; align-items: center; background: #bababa; border-radius: 4px 4px 0 0; color: #666; font-size: 12px; }
.doc-tab.active { background: #f2f2f2; color: #444; }
.doc-name { flex: 1; display: flex; align-items: center; justify-content: center; gap: 4px; padding-left: 2px; }
.active .doc-name { padding-left: 0; }
.faded { opacity: .55; }
.tab-close { width: 10px; height: 10px; }
.add-tab { width: 28px; height: 28px; display: grid; place-items: center; background: #bababa; border-radius: 4px 4px 0 0; }
.add-tab svg { margin-bottom: 2px; }
.status { width: 144px; height: 32px; margin-left: 1px; }
.avatar { width: 25px; height: 25px; margin-bottom: 4px; margin-left: 1px; border-radius: 50%; background: #ececec; display: grid; place-items: center; font: 11px Roboto, sans-serif; color: #555; }

.ribbon { height: 82px; flex: none; display: flex; border-bottom: 1px solid #ddd; font-family: Roboto, sans-serif; }
.workspace { width: 111px; height: 62px; margin: 10px 5px 0 11px; display: flex; align-items: center; justify-content: center; gap: 5px; border: 2px solid #dcdcdc; border-radius: 4px; font-weight: 700; font-size: 11px; }
.ribbon-main { flex: 1; }
.ribbon-tabs { height: 25px; display: flex; line-height: 23px; }
.ribbon-tabs span { text-align: center; white-space: nowrap; }
.ribbon-tabs .solid { width: 76px; }
.ribbon-tabs .selected { width: 73px; margin-left: 13px; color: #0a94d4; font-weight: 700; border-bottom: 3px solid #0a94d4; }
.ribbon-tabs .sheet { width: 130px; letter-spacing: -.3px; }
.ribbon-tabs .tools { width: 63px; }
.groups { display: flex; height: 52px; }
.group { display: flex; flex-direction: column; align-items: center; border-right: 2px solid #ddd; height: 52px; }
.group:last-child { border: 0; }
.icons { display: flex; gap: 5px; margin-top: -1px; height: 38px; }
.icons svg { width: 38px; height: 38px; }
.icons .on { background: #0a94d4; }
.group label { display: flex; align-items: center; gap: 3px; margin-top: 3px; line-height: 14px; letter-spacing: -.05px; }
.create { width: 225px; } .modify { width: 183px; } .assemble { width: 97px; } .construct { width: 99px; } .inspect { width: 79px; } .insert { width: 69px; } .select { width: 74px; }
.assemble .icons { gap: 6px; }
.caret { color: #333; }

.banner { height: 32px; flex: none; background: #ffc16e; display: flex; align-items: center; justify-content: center; color: #fff; font: bold 13px "Liberation Sans", sans-serif; letter-spacing: .2px; padding-right: 26px; position: relative; }
.banner-close { position: absolute; right: 16px; top: 10px; }

.viewport { position: relative; height: 509px; flex: none; overflow: hidden; background: #f5f5f5; }
.scene { width: 1360px; height: 509px; }
.minor { fill: none; stroke: #000; stroke-opacity: .06; stroke-width: .9; }
.minor.flat { stroke: #000; stroke-opacity: .055; }
.major { fill: none; stroke: #555; stroke-opacity: .42; stroke-width: .9; }
.major.flat { stroke-opacity: .3; }
.shadow { fill: #777; opacity: .35; }
.highlight { fill: #c9c4be; opacity: .5; }
.band { fill: #98a3a2; fill-opacity: .96; }
.rail { fill: none; stroke: #087bf4; stroke-width: 3.600; stroke-linecap: round; }
.knots { fill: #222; fill-opacity: .6; }
.viewcube { position: absolute; left: 1280px; top: 9px; width: 70px; height: 70px; }
.viewcube span { position: absolute; left: 19px; top: 36px; font: bold 8px/10px "Liberation Sans", sans-serif; letter-spacing: .2px; color: #8a8f96; }

.float-input { position: absolute; left: 664px; top: 65px; width: 108px; height: 22px; display: flex; align-items: center; background: rgba(242,242,242,.9); }
.dots { width: 4px; height: 18px; margin-left: 5px; background: radial-gradient(circle, #bbb 35%, transparent 40%) 0 0/3px 3px; }
.bar { width: 2px; height: 20px; background: #ddd; margin: 0 3px 0 1px; }
.value { width: 69px; height: 20px; border: 1px solid #bbb; background: #fff; display: grid; place-items: center; }
.value mark { background: #0874d4; color: #fff; padding: 1px 0; border-right: 1px solid #000; }
.more { width: 3px; height: 14px; margin-left: 11px; background: radial-gradient(circle, #777 50%, transparent 55%) 0 0/3px 5px; }
.tag { position: absolute; height: 22px; padding: 0 3px 0 2px; background: #f2f2f2; line-height: 22px; }
.tag.path { left: 419px; top: 210px; width: 26px; overflow: hidden; }
.tag.guide { left: 438px; top: 216px; width: 56px; letter-spacing: -.2px; white-space: nowrap; }
.tag.profile { left: 424px; top: 244px; width: 36px; letter-spacing: -.1px; }

.browser { position: absolute; left: 4px; top: 4px; width: 300px; }
.panel-head { height: 25px; display: flex; align-items: center; padding: 0 0 0 4px; background: #f2f2f2; border: 1px solid #ccc; color: #555; font-family: Roboto, sans-serif; letter-spacing: .15px; }
.collapse { width: 10px; height: 6px; margin-right: 10px; }
.panel-head .inset { margin-left: 20px; letter-spacing: -.35px; }
.panel-head .hide { margin-left: auto; margin-right: 6px; }
.tree { list-style: none; margin: 3px 0 0; padding: 0; letter-spacing: -.17px; }
.tree li { display: flex; align-items: center; height: 24px; padding-left: 36px; }
.tree .root { padding-left: 17px; }
.tree .arrow { margin-right: 9px; }
.lv1 .arrow[width="12"] { margin-left: -2px; margin-right: 8px; }
.root .arrow { margin-right: 7px; }
.chip { display: flex; align-items: center; height: 20px; padding: 0 11px 0 3px; background: #f2f2f2; position: relative; }
.lv1 .chip > span { margin-left: 14px; }
.lv1.two .chip > svg + svg { margin-left: 9px; }
.unsaved { display: flex; align-items: center; width: 98px; height: 16px; margin-left: 6px; padding: 0 4px 0 3px; background: #999; color: #fff; }
.unsaved span { margin-left: 14px; letter-spacing: .2px; }
.radio { width: 14px; height: 14px; margin-left: 4px; }
.root .chip { padding-right: 8px; }
.off { opacity: .3; }
.tree .leaf { padding-left: 72px; }
.leaf .chip { padding-right: 0; }
.item { width: 86px; height: 20px; display: flex; align-items: center; margin-left: 6px; padding-left: 4px; font-weight: 400; position: relative; }
.item span { margin-left: 13px; }
.chosen .item { background: #0a94d4; color: #fff; font-weight: 700; letter-spacing: 0; }
.hatch { position: absolute; left: 2px; bottom: 1px; width: 81px; height: 3px; background: repeating-linear-gradient(125deg, #7c8bad 0 1.800px, transparent 1.800px 5px); }
.chip > .hatch { left: 26px; width: 88px; bottom: 1px; }

.comments { position: absolute; left: 4px; top: 255px; width: 300px; height: 250px; display: flex; flex-direction: column; }
.comments p { flex: 1; margin: 0; padding: 13px 14px; text-align: center; line-height: 12px; font-weight: 700; font-size: 10.500px; letter-spacing: -.33px; color: #6c6c6c; background: #ddd; border: 1px solid #aaa; border-top: 0; }
.comment-foot { height: 25px; background: #e6e6e6; }

.sweep { position: absolute; left: 1056px; top: 90px; width: 300px; height: 389px; border: 1px solid #ccc; background: #f2f2f2; display: flex; flex-direction: column; }
.sweep-head { height: 24px; flex: none; display: flex; align-items: center; padding: 0 4px 0 1px; border-bottom: 1px solid #ccc; color: #666; font-family: Roboto, sans-serif; }
.sweep-head .hide { margin: 0 4px 0 5px; }
.expand { width: 10px; height: 6px; margin-left: auto; }
.sweep-body { flex: 1; overflow: hidden; }
.field { height: 30px; display: flex; align-items: center; padding-left: 12px; }
.field label { width: 106px; letter-spacing: -.2px; }
.drop { width: 148px; height: 27px; display: flex; align-items: center; gap: 3px; padding: 0 5px 0 2px; background: #fff; border: 1px solid #ccc; letter-spacing: -.1px; }
.drop svg { width: 17px; height: 16px; overflow: visible; }
.drop .arrow { width: 6px; height: 4px; margin-left: auto; color: #333; }
.pick { width: 78px; height: 27px; margin-left: 0; display: flex; align-items: center; gap: 3px; padding-left: 6px; background: #fff; border: 1px solid #ddd; }
.pick.active { background: #0a94d4; border-color: #0a94d4; color: #fff; }
.clear { margin-left: 11px; color: #666; }
.check { width: 14px; height: 14px; margin-left: 5px; }
.flip { width: 23px; height: 28px; background: #0a94d4; display: grid; place-items: center; }
.flip svg { width: 14px; height: 14px; }
.input { width: 148px; height: 26px; border: 1px solid #bbb; background: #fff; padding-left: 4px; line-height: 24px; letter-spacing: -.1px; }
.scroll { position: absolute; right: 3px; top: 24px; width: 5px; height: 324px; background: #999; border-radius: 3px; }
.sweep-foot { height: 37px; flex: none; display: flex; align-items: center; gap: 10px; padding: 0 11px 0 8px; border-top: 1px solid #ccc; }
.sweep-foot svg { width: 12px; height: 12px; margin-right: auto; }
.btn { width: 60px; height: 19px; border: 1px solid #bbb; background: #eee; text-align: center; line-height: 18px; font-size: 12px; letter-spacing: .15px; color: #777; }
.tooltip { position: absolute; left: 934px; top: 399px; width: 151px; height: 15px; padding-left: 2px; background: #f2f2f2; border: 1px solid #777; font: 11px/14px "Noto Sans", sans-serif; color: #111; letter-spacing: -.27px; white-space: nowrap; }
.multi { position: absolute; right: 16px; top: 487px; font-size: 11px; letter-spacing: .3px; }
.navtools { position: absolute; left: 561px; top: 481px; height: 24px; display: flex; background: #f2f2f2; }
.navtools svg { height: 24px; }

.timeline { height: 50px; flex: none; display: flex; align-items: center; border-top: 2px solid #ccc; }
.playback { width: 135px; height: 48px; }
.features { width: 100px; height: 48px; }
.settings { margin-left: auto; margin-right: 13px; }
```
